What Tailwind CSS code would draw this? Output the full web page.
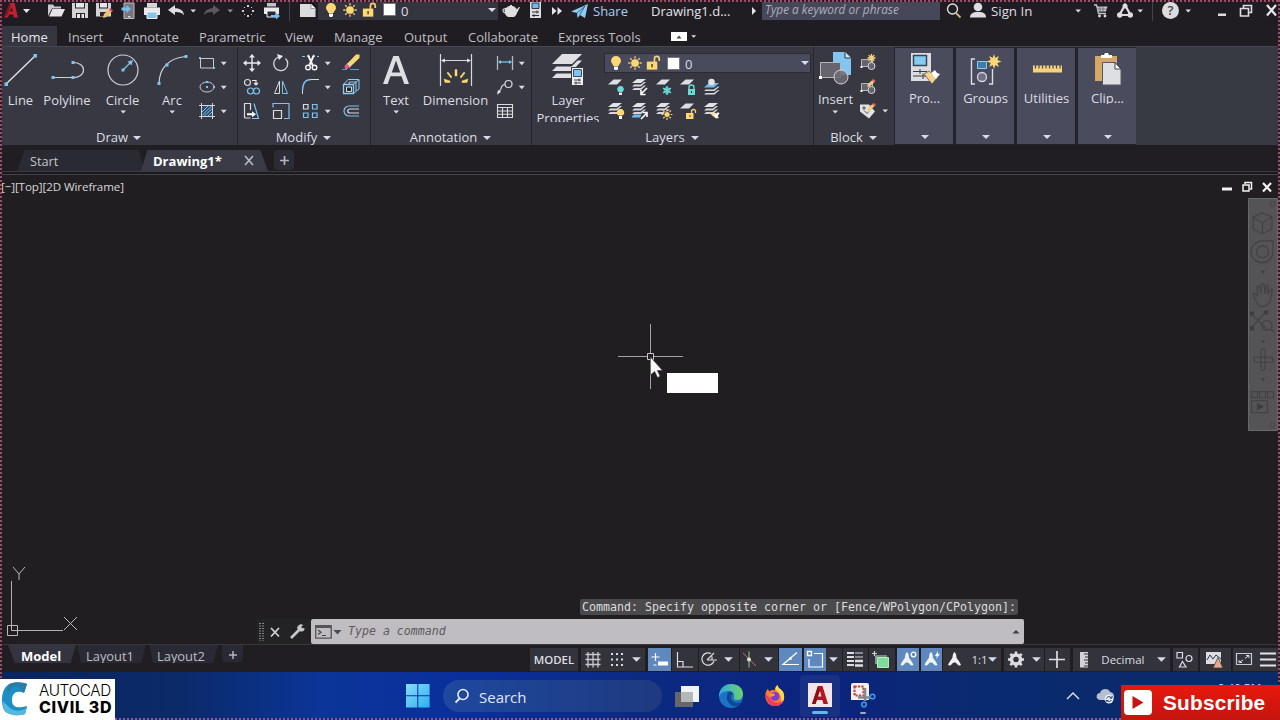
<!DOCTYPE html>
<html lang="en">
<head>
<meta charset="utf-8">
<title>Drawing1 - CAD</title>
<script src="https://cdn.jsdelivr.net/npm/@tailwindcss/browser@4"></script>
</head>
<body class="bg-[#201e22]">
<svg width="0" height="0" class="absolute">
  <defs>
    <symbol id="caret" viewBox="0 0 10 10"><path d="M2.500 3.500h5.500L5.200 6.500z" fill="#dcdde4"/></symbol>
    <symbol id="bigcaret" viewBox="0 0 10 10"><path d="M1 3h8L5 7z" fill="#d6dbea"/></symbol>
    <symbol id="bulb" viewBox="0 0 20 20"><path d="M10 3a5 5 0 0 0-5 5c0 2 2 3 2.500 5h5c.5-2 2.500-3 2.500-5a5 5 0 0 0-5-5z" fill="#ffd873"/><path d="M8 13.500h4V16l-1 1H9l-1-1z" fill="#fff"/></symbol>
    <symbol id="sun" viewBox="0 0 20 20"><circle cx="10" cy="10" r="4.300" fill="#ffd873"/><path d="M10 2.500v2.500M10 15v2.500M2.500 10H5M15 10h2.500M4.700 4.700l1.700 1.700M13.600 13.600l1.700 1.700M4.700 15.300l1.700-1.700M13.600 6.400l1.700-1.700" stroke="#f3cd77" stroke-width="1.500"/></symbol>
    <symbol id="lock" viewBox="0 0 20 20"><path d="M11 9V5.500a2.500 2.500 0 0 1 5 0V8" fill="none" stroke="#f3cd77" stroke-width="1.800"/><path d="M3 8.500h11V17H3z" fill="#ffd873"/><path d="M8.500 11v3.500" stroke="#43412f" stroke-width="1.500"/></symbol>
    <symbol id="stack" viewBox="0 0 24 24"><path d="M9 4h9l-5 4H4z" fill="#e2e3e6"/><path d="M16 7h2l-5 4.500H4l2.200-2h6.600zM16 10.500h2L13 15H4l2.200-2h6.600z" fill="#d4d6db"/></symbol>
    <symbol id="sheet" viewBox="0 0 24 24"><path d="M9.500 4.500H18l-5 5H4z" fill="#dcdee3"/></symbol>
    <symbol id="blockbase" viewBox="0 0 24 24"><path d="M5.500 8.500h11v7h-11z" fill="#66646c" stroke="#b5b6bc"/><circle cx="15.500" cy="15" r="3.500" fill="#66646c" stroke="#d5d6da"/><path d="M4.500 15h2v2h-2z" fill="#fff"/></symbol>
    <symbol id="person" viewBox="0 0 22 22"><path d="M11 3c1.400 1.200 2 3.500 2 5.700 1.400 2.400 3.800 4.800 4.500 7.300-1 1-3 .3-3.700-.8-.8-1-1.700-1.700-2.800-1.700s-2 .7-2.800 1.700c-.7 1.100-2.700 1.800-3.700.8.700-2.500 3.100-4.900 4.500-7.300C9 6.500 9.600 4.200 11 3z" fill="#f1f1f3"/></symbol>
  </defs>
</svg>

<div class="relative flex h-[720px] w-[1280px] flex-col overflow-hidden bg-[#201e22] font-['Open_Sans','Noto_Sans',sans-serif] text-[13px] text-[#dddde2]">

  <!-- title bar -->
  <header class="flex h-[26px] shrink-0 bg-[#201d22]">
    <div class="flex h-[21px] w-full items-center">
      <svg class="w-[20px] h-[20px]" viewBox="0 0 20 20"><path d="M4 16.500 10 2h4.500l3.500 14.500h-4.200l-.6-3H9l-1.200 3zM10 10.500h2.700L12 6z" fill="#c32032"/><path d="M4 16.500 10 2l1 3-3.500 9z" fill="#8c1423"/></svg>
      <svg class="w-[12px] h-[12px]" viewBox="0 0 12 12"><path d="M3 4h7L6.500 8z" fill="#e4e4ea"/></svg>
      <svg class="ml-[12px] h-[20px] w-[24px]" viewBox="0 0 24 20"><path d="M4 15V3.500h5l1.500 2H17V7.500H8z" fill="#c9c9cd"/><path d="M8.500 8H21l-3.500 7.500H5z" fill="#e5e4e6"/></svg>
      <svg class="h-[20px] w-[24px]" viewBox="0 0 24 20"><path d="M4 2h16v15H4z" fill="#d4d2d5"/><path d="M7 2h10v5.500H7zM8 12h9v5H8z" fill="#29272b"/><path d="M8 2h8v4.500H8zM9 13h3v4H9zM13.500 13h2.500v4h-2.500z" fill="#e7e7ea"/></svg>
      <svg class="h-[20px] w-[24px]" viewBox="0 0 24 20"><path d="M4 2h15v13.500H4z" fill="#d4d2d5"/><path d="M7 2h9v5.500H7zM8 11h8v4H8z" fill="#29272b"/><path d="M8 2h7v4.500H8z" fill="#e7e7ea"/><path d="m11 17 1-4 6-5.500 2.500 2.500-6 6z" fill="#f3c25c"/><path d="m17 8.500 1.500-1.500 2.500 2.500-1.500 1.500z" fill="#d4466a"/></svg>
      <svg class="h-[20px] w-[24px]" viewBox="0 0 24 20"><path d="M8 2h10v15.500H8z" fill="#77777d" stroke="#bdbdc1"/><path d="M12 15.800h2.500" stroke="#fff"/><path d="M5.500 6.500h5V4l4.500 4-4.500 4V9.500h-5z" fill="#74c0f2"/></svg>
      <svg class="h-[20px] w-[24px]" viewBox="0 0 24 20"><path d="M7 2h10v4.500H7z" fill="#d5d6d8"/><path d="M4 6.500h16V14H4z" fill="#e9e9eb"/><path d="M7 11h10v6.500H7z" fill="#8bc2ec" stroke="#f3f3f3"/></svg>
      <svg class="h-[20px] w-[24px]" viewBox="0 0 24 20"><path d="m4 9 7-5v3.300c5 0 8.500 2 9 7-2-2.800-5-3.500-9-3.300v3z" fill="#dedee2"/></svg>
      <svg class="h-[10px] w-[10px]"><use href="#caret"/></svg>
      <svg class="ml-[3px] h-[20px] w-[24px]" viewBox="0 0 24 20"><path d="m19 9-7-5v3.300c-5 0-8.500 2-9 7 2-2.800 5-3.500 9-3.300v3z" fill="#59595e"/></svg>
      <svg class="h-[10px] w-[10px] opacity-60"><use href="#caret"/></svg>
      <svg class="ml-[1px] h-[20px] w-[24px]" viewBox="0 0 24 20"><path d="M11 4h2v2h-2zM11 14h2v2h-2zM6 9h2v2H6zM16 9h2v2h-2zM8 6h1v1H8zM15 6h1v1h-1zM8 13h1v1H8zM15 13h1v1h-1z" fill="#cfd0d4"/></svg>
      <svg class="h-[20px] w-[24px]" viewBox="0 0 24 20"><path d="M7 2h9v3.500H7z" fill="#bfc0c4"/><path d="M4 6.500h15V13H4z" fill="#e9e9eb"/><path d="M7 10h9v6H7z" fill="#29272b" stroke="#f3f3f3"/><path d="M11 14h5v-2.500l4 3.500-4 3.500V16h-5z" fill="#74c0f2"/></svg>
      <div class="ml-[5px] h-[20px] w-px bg-[#45434a]"></div>
      <svg class="ml-[7px] h-[20px] w-[21px]" viewBox="0 0 21 20"><path d="M3 3h11l4.500 4.500V16H3z" fill="#dcdbdd"/><path d="M14 3v4.500h4.500" fill="#fff" stroke="#77777b" stroke-width=".7"/></svg>
      <div class="flex h-[20px] w-[180px] -translate-y-px items-center bg-[#35353f] pl-[3px]">
        <svg class="h-[20px] w-[20px]"><use href="#bulb"/></svg>
        <svg class="h-[20px] w-[18px]"><use href="#sun"/></svg>
        <svg class="ml-px h-[20px] w-[19px]"><use href="#lock"/></svg>
        <div class="ml-[4px] h-[13px] w-[13px] border border-[#777] bg-white"></div>
        <span class="ml-[5px] translate-y-px leading-5">0</span>
        <svg class="ml-auto h-[12px] w-[12px]"><use href="#bigcaret" x="1" y="1" width="10" height="10"/></svg>
      </div>
      <svg class="ml-[2px] h-[20px] w-[22px]" viewBox="0 0 22 20"><path d="M7 6.500c0-1 2-1.500 3-1.500V4h2v1c1 0 3 .5 3 1.500 1 .4 1.500 1 1.700 2L19 6h1l-3 6c-.6 1.700-1.500 3-3 4H8c-1.500-1-2.500-2-3-3.500C3 12 2 10 2.500 8.500S5.500 7 7 6.500z" fill="#dedde0"/><path d="M5 11C3.500 10.500 3.500 8.700 5 8.500" fill="none" stroke="#201d22" stroke-width=".9"/></svg>
      <svg class="ml-[3px] h-[20px] w-[20px]" viewBox="0 0 20 20"><path d="M5 1h11v16H5z" fill="#dfdfe2"/><path d="M7 2h7v5.500H7z" fill="#6fb9e6" stroke="#2d3d4b"/><path d="M7 11h7M7 14.500h7M12 9.500v3M9 13v3" stroke="#303036"/></svg>
      <svg class="ml-[4px] h-[20px] w-[16px]" viewBox="0 0 16 20"><path d="m3 6 4.500 4L3 14zM8.500 6l4.500 4-4.500 4z" fill="#e6e6ea"/></svg>
      <svg class="ml-[5px] h-[20px] w-[20px]" viewBox="0 0 20 20"><path d="M1 10.500 18 3l-3 14-5-3-2.500 3-.5-5z" fill="#8bcdf5"/><path d="m7 12 8-7-5.500 9" fill="none" stroke="#29506c" stroke-width=".8"/></svg>
      <span class="ml-[3px] w-[58px] translate-y-px text-[13px] text-[#a5d4f3]">Share</span>
      <span class="w-[98px] translate-y-px text-[#e2e2e6]">Drawing1.d...</span>
      <svg class="h-[10px] w-[10px]" viewBox="0 0 10 10"><path d="M3 1l4 4-4 4z" fill="#e6e6ea"/></svg>
      <div class="ml-[3px] flex h-[20px] w-[178px] -translate-y-px items-center bg-[#46485a] pl-[3px] text-[11.800px] italic text-[#acaebb]">Type a keyword or phrase</div>
      <svg class="ml-[5px] h-[20px] w-[18px]" viewBox="0 0 18 20"><circle cx="7.500" cy="8" r="5" fill="none" stroke="#dedee2" stroke-width="1.400"/><path d="m11 12 4.500 4.500" stroke="#d2b27e" stroke-width="1.800"/></svg>
      <svg class="ml-[6px] h-[20px] w-[18px]" viewBox="0 0 18 20"><circle cx="9" cy="6" r="4.300" fill="#dddce0"/><path d="M1 16.500c0-4 3-5 5.500-5.500h5c3 .5 5.500 1.500 5.500 5.500z" fill="#dddce0"/></svg>
      <span class="ml-[4px] w-[82px] translate-y-px text-[13.300px]">Sign In</span>
      <svg class="h-[10px] w-[10px]"><use href="#caret"/></svg>
      <svg class="ml-[9px] h-[20px] w-[18px]" viewBox="0 0 18 20"><path d="M2 4h2.500l2 8.500H14" fill="none" stroke="#c5c5c9" stroke-width="1.300"/><path d="M5 5.500h10.500l-1.500 5H6.500z" fill="#c5c5c9"/><path d="M5 8h10M8 5v6M11 5v6" stroke="#504f54" stroke-width=".6"/><circle cx="7.500" cy="15" r="1.400" fill="#ddd"/><circle cx="13" cy="15" r="1.400" fill="#ddd"/></svg>
      <svg class="ml-[6px] h-[20px] w-[18px]" viewBox="0 0 18 20"><path d="M9 4 3.500 14h11z" fill="none" stroke="#dddce0" stroke-width="2.200"/><circle cx="9" cy="5" r="2.500" fill="#dddce0"/><circle cx="3.700" cy="14" r="2.700" fill="#dddce0"/><circle cx="14.300" cy="14" r="2.700" fill="#dddce0"/></svg>
      <svg class="ml-[1px] h-[10px] w-[10px]"><use href="#caret"/></svg>
      <div class="ml-[7px] h-[20px] w-px bg-[#45434a]"></div>
      <div class="ml-[9px] flex h-[17px] w-[17px] items-center justify-center rounded-full bg-[#dcdbde] text-[13px] font-semibold text-[#444349]">?</div>
      <svg class="ml-[4px] h-[10px] w-[10px]"><use href="#caret"/></svg>
      <svg class="ml-[23px] h-[20px] w-[12px] shrink-0" viewBox="0 0 12 20"><path d="M2 12.500h8V15H2z" fill="#dddce0"/></svg>
      <svg class="ml-[10px] h-[20px] w-[16px] shrink-0" viewBox="0 0 16 20"><path d="M5.500 7V4.500h8v7H11M2.500 7.500h8V15h-8z" fill="none" stroke="#dddce0" stroke-width="1.600"/></svg>
      <svg class="ml-[9px] h-[20px] w-[16px] shrink-0" viewBox="0 0 16 20"><path d="m4 4 9 10.500M13 4 4 14.500" stroke="#e8e7eb" stroke-width="2.200"/></svg>
    </div>
  </header>

  <!-- ribbon tabs -->
  <nav class="flex h-[20px] shrink-0 bg-[#201d22] pl-[2px] leading-[23px] text-[#bfbfc5]">
    <span class="w-[55px] bg-[#35363f] pl-[9px] text-[#e6e6ea]">Home</span>
    <span class="w-[55px] pl-[11px]">Insert</span>
    <span class="w-[76px] pl-[11px]">Annotate</span>
    <span class="w-[86px] pl-[11px]">Parametric</span>
    <span class="w-[49px] pl-[11px]">View</span>
    <span class="w-[70px] pl-[11px]">Manage</span>
    <span class="w-[64px] pl-[11px]">Output</span>
    <span class="w-[90px] pl-[11px]">Collaborate</span>
    <span class="w-[124px] pl-[11px]">Express Tools</span>
    <span class="mt-[6px] flex h-[9px] w-[16px] items-center justify-center bg-white"><svg class="h-[8px] w-[8px]" viewBox="0 0 8 8"><path d="M1.500 5.500h5L4 2.500z" fill="#444"/></svg></span>
    <svg class="ml-[2px] mt-[6px] h-[9px] w-[9px]"><use href="#caret"/></svg>
  </nav>

  <!-- ribbon -->
  <section class="flex h-[99px] shrink-0 border-t border-[#45464f] bg-[#373a42] pl-px text-[#dcdde3]">
    <div class="flex w-[237px] flex-col border-r border-[#26262d] bg-[#373841] pt-[4px]">
      <div class="flex h-[72px]">
        <div class="flex w-[39px] flex-col items-center">
          <svg class="h-[38px] w-[39px]" viewBox="0 0 39 38"><path d="M5 33 34 5" stroke="#e6e6ea" stroke-width="1.300"/><path d="M3.500 31.500h3.500V35H3.500zM32.500 3H36v3.500h-3.500z" fill="#7cc4f2"/></svg>
          <span class="leading-[22px]">Line</span>
        </div>
        <div class="flex w-[54px] flex-col items-center">
          <svg class="h-[38px] w-[40px]" viewBox="0 0 40 38"><path d="M6 26.500h20M26 11.500c6 0 10.500 3 10.500 7.500S32 26.500 26 26.500" fill="none" stroke="#d0d1d7" stroke-width="1.200"/><path d="M4.500 25h3v3h-3zM24.500 25h3v3h-3zM24.500 10h3v3h-3z" fill="#7cc4f2"/></svg>
          <span class="leading-[22px]">Polyline</span>
        </div>
        <div class="flex w-[57px] flex-col items-center">
          <svg class="h-[38px] w-[40px]" viewBox="0 0 40 38"><circle cx="20" cy="19" r="15" fill="none" stroke="#d0d1d7" stroke-width="1.200"/><path d="m20 19 7-7" stroke="#7cc4f2" stroke-width="1.300"/><path d="M24.500 10.500 30 9l-1.500 5.500zM18.500 17.500h3v3h-3z" fill="#7cc4f2"/></svg>
          <span class="leading-[22px]">Circle</span>
          <svg class="-mt-[4px] h-[10px] w-[10px]"><use href="#caret"/></svg>
        </div>
        <div class="flex w-[42px] flex-col items-center">
          <svg class="h-[38px] w-[40px]" viewBox="0 0 40 38"><path d="M7 33C7 17 17 7 33.500 5.500" fill="none" stroke="#d0d1d7" stroke-width="1.200"/><path d="M5.500 31h3v3h-3zM13.500 12.500h3v3h-3zM32.500 4h3v3h-3z" fill="#7cc4f2"/></svg>
          <span class="leading-[22px]">Arc</span>
          <svg class="-mt-[4px] h-[10px] w-[10px]"><use href="#caret"/></svg>
        </div>
        <div class="ml-[2px] flex flex-col">
          <div class="flex h-[24px] items-center"><svg class="h-[24px] w-[24px]" viewBox="0 0 24 24"><path d="M5.500 7.500h13v9.500h-13z" fill="none" stroke="#c9cad0"/><path d="M4 6h2v2H4zM18 16h2v2h-2z" fill="#7cc4f2"/></svg><svg class="-ml-px h-[11px] w-[11px]"><use href="#caret"/></svg></div>
          <div class="flex h-[24px] items-center"><svg class="h-[24px] w-[24px]" viewBox="0 0 24 24"><ellipse cx="12" cy="12" rx="7" ry="5" fill="none" stroke="#c9cad0"/><path d="M11 11h2v2h-2zM18 11h2v2h-2zM11 6h2v2h-2z" fill="#7cc4f2"/></svg><svg class="-ml-px h-[11px] w-[11px]"><use href="#caret"/></svg></div>
          <div class="flex h-[24px] items-center"><svg class="h-[24px] w-[24px]" viewBox="0 0 24 24"><path d="M7 7h10v10H7z" fill="#2e4c66"/><path d="M7 13l6-6M7 16.500 16.500 7M9.500 17l7.500-7.500M13 17l4-4" stroke="#7cc4f2"/><path d="M4 6.500h16M4 17.500h16M6.500 4v16M17.500 4v16" stroke="#d3d4d9"/></svg><svg class="-ml-px h-[11px] w-[11px]"><use href="#caret"/></svg></div>
        </div>
      </div>
      <div class="flex h-[22px] items-center justify-center gap-[4px] pt-[7px]">Draw<svg class="h-[10px] w-[10px]"><use href="#bigcaret"/></svg></div>
    </div>

    <div class="flex w-[133px] flex-col border-r border-[#26262d] bg-[#373841] pt-[4px]">
      <div class="grid h-[72px] grid-cols-[29px_29px_26px_11px_32px] grid-rows-3">
        <svg class="h-[24px] w-[28px]" viewBox="0 0 28 24"><path d="M14 5v14M7 12h14" stroke="#e9e9ed" stroke-width="1.400"/><path d="m14 3 3 3.500h-6zM14 21l3-3.500h-6zM5 12l3.500-3v6zM23 12l-3.500-3v6z" fill="#e9e9ed"/></svg>
        <svg class="h-[24px] w-[28px]" viewBox="0 0 28 24"><path d="M18.500 7.500A7 7 0 1 1 11.500 6" fill="none" stroke="#d9dae0" stroke-width="1.300"/><path d="M10 3l6 2-4 4z" fill="#e9e9ed"/></svg>
        <svg class="h-[24px] w-[28px]" viewBox="0 0 28 24"><path d="M6 5.500h17" stroke="#7cc4f2" stroke-dasharray="3 2"/><path d="m12 4 5 11M18 4l-5 11" stroke="#f3f3f3" stroke-width="1.900"/><circle cx="12" cy="16.500" r="2.300" fill="none" stroke="#f3f3f3" stroke-width="1.400"/><circle cx="18.500" cy="16.500" r="2.300" fill="none" stroke="#f3f3f3" stroke-width="1.400"/></svg>
        <svg class="h-[11px] w-[11px] place-self-center"><use href="#caret"/></svg>
        <svg class="ml-[4px] h-[24px] w-[28px]" viewBox="0 0 28 24"><path d="m10 13 9-9.500h3.500V7L13 16z" fill="#f9d873"/><path d="m10 13 3 3" stroke="#fff" stroke-width="2"/><path d="m7.500 15 2.500-2.500 3 3-2.500 2.500H8z" fill="#e0617b"/><path d="M5 18.500h5M13 18.500h9" stroke="#4a9fdb" stroke-width="1.200"/></svg>

        <svg class="h-[24px] w-[28px]" viewBox="0 0 28 24"><circle cx="9.500" cy="7.500" r="3" fill="none" stroke="#d9dae0" stroke-width="1.200"/><path d="M14 5.500h4V9M16 8l2 2 2-2" fill="none" stroke="#e9e9ed" stroke-width="1.200"/><circle cx="12.500" cy="16" r="3" fill="none" stroke="#7cc4f2" stroke-width="1.200"/><circle cx="18.500" cy="16" r="3" fill="none" stroke="#7cc4f2" stroke-width="1.200"/></svg>
        <svg class="h-[24px] w-[28px]" viewBox="0 0 28 24"><path d="M12.500 6v12.500h-5z" fill="none" stroke="#d9dae0"/><path d="M15.500 6v12.500h5z" fill="none" stroke="#7cc4f2"/></svg>
        <svg class="h-[24px] w-[28px]" viewBox="0 0 28 24"><path d="M6.500 19v-3M15 4.500h8" stroke="#d9dae0"/><path d="M6.500 16C6.500 9 9 4.500 15 4.500" fill="none" stroke="#7cc4f2" stroke-width="1.300"/></svg>
        <svg class="h-[11px] w-[11px] place-self-center"><use href="#caret"/></svg>
        <svg class="ml-[4px] h-[24px] w-[28px]" viewBox="0 0 28 24"><path d="M6.500 9.500h10v9h-10z" fill="none" stroke="#8ccdf5" stroke-width="1.300"/><path d="M9.500 12h5v4.500h-5z" fill="#1e2830" stroke="#d9dae0"/><path d="M6.500 9.500l4.500-5H22l-5.500 5M22 4.500v9.500l-5.500 4.500M12 9V7h7v9" fill="none" stroke="#8ccdf5"/></svg>

        <svg class="h-[24px] w-[28px]" viewBox="0 0 28 24"><path d="M6.500 19V4.500h6V11M6.500 19h6" fill="none" stroke="#d9dae0" stroke-width="1.200"/><path d="M16 4.500l4.500 15H14" fill="none" stroke="#7cc4f2" stroke-width="1.200"/><path d="M9 14.300h5v-2l4 3-4 3v-2H9z" fill="#fff"/></svg>
        <svg class="h-[24px] w-[28px]" viewBox="0 0 28 24"><path d="M6 8.500V4.500h16V19.500h-5" fill="none" stroke="#7cc4f2" stroke-width="1.200"/><path d="M6.500 11.500h8v8h-8z" fill="none" stroke="#d9dae0" stroke-width="1.200"/></svg>
        <svg class="h-[24px] w-[28px]" viewBox="0 0 28 24"><path d="M7.500 5.500H12V10H7.500z" fill="none" stroke="#d9dae0" stroke-width="1.200"/><path d="M16.500 5.500H21V10h-4.500zM7.500 14H12v4.500H7.500zM16.500 14H21v4.500h-4.500z" fill="none" stroke="#7cc4f2" stroke-width="1.200"/></svg>
        <svg class="h-[11px] w-[11px] place-self-center"><use href="#caret"/></svg>
        <svg class="ml-[4px] h-[24px] w-[28px]" viewBox="0 0 28 24"><path d="M22 7H12a5 5 0 0 0 0 10h10" fill="none" stroke="#7cc4f2" stroke-width="1.200"/><path d="M22 10h-9c-3 0-3 4 0 4h9" fill="none" stroke="#d9dae0" stroke-width="1.200"/></svg>
      </div>
      <div class="flex h-[22px] items-center justify-center gap-[5px] pt-[7px]">Modify<svg class="h-[10px] w-[10px]"><use href="#bigcaret"/></svg></div>
    </div>

    <div class="flex w-[161px] flex-col border-r border-[#26262d] bg-[#373841] pt-[4px]">
      <div class="flex h-[72px]">
        <div class="flex w-[50px] flex-col items-center">
          <svg class="h-[38px] w-[40px]" viewBox="0 0 40 38"><path d="M7 33 17.300 5h5.400L33 33h-4.700l-2.800-7.800h-11L11.700 33zm8.800-11.600h8.400L20 9.500z" fill="#dedfe3"/></svg>
          <span class="leading-[22px]">Text</span>
          <svg class="-mt-[4px] h-[10px] w-[10px]"><use href="#caret"/></svg>
        </div>
        <div class="flex w-[69px] flex-col items-center">
          <svg class="h-[38px] w-[40px]" viewBox="0 0 40 38"><path d="M4.500 3v32M35.500 3v32M6 9.500h28" stroke="#d9dae0" stroke-width="1.200"/><path d="m5 9.500 4-2v4zM35 9.500l-4-2v4z" fill="#e9e9ed"/><path d="m19 19 1-1 1 1v6h-2zM12 21l4 5-1 1-4-5zM28 21l-4 5 1 1 4-5zM8 28l6 2v1.500H9zM32 28l-6 2v1.500h5z" fill="#ffd873" stroke="#ffd873" stroke-width=".5"/></svg>
          <span class="leading-[22px]">Dimension</span>
        </div>
        <div class="ml-[3px] flex flex-col">
          <div class="flex h-[24px] items-center"><svg class="h-[24px] w-[24px]" viewBox="0 0 24 24"><path d="M4.500 5v14M19.500 5v14" stroke="#b9bac0" stroke-width="1.300"/><path d="M6 11h12" stroke="#7cc4f2" stroke-width="1.300"/><path d="m5 11 3-2v4zM19 11l-3-2v4z" fill="#7cc4f2"/></svg><svg class="-ml-px h-[11px] w-[11px]"><use href="#caret"/></svg></div>
          <div class="flex h-[24px] items-center"><svg class="h-[24px] w-[24px]" viewBox="0 0 24 24"><circle cx="15.500" cy="9" r="3.500" fill="none" stroke="#d9dae0" stroke-width="1.200"/><path d="M12 9.500c-3 0-3.500 2-4 4L6 17" fill="none" stroke="#d9dae0" stroke-width="1.200"/><path d="m4 19.500 1-4.500 3 2z" fill="#e9e9ed"/></svg><svg class="-ml-px h-[11px] w-[11px]"><use href="#caret"/></svg></div>
          <div class="flex h-[24px] items-center"><svg class="h-[24px] w-[24px]" viewBox="0 0 24 24"><path d="M4.500 5.500h15v13h-15zM4.500 8.500h15M4.500 12h15M4.500 15.200h15M9.500 8.500v10M14.500 8.500v10" fill="none" stroke="#d9dae0" stroke-width="1.100"/></svg></div>
        </div>
      </div>
      <div class="flex h-[22px] items-center justify-center gap-[5px] pt-[7px]">Annotation<svg class="h-[10px] w-[10px]"><use href="#bigcaret"/></svg></div>
    </div>

    <div class="flex w-[282px] flex-col border-r border-[#26262d] bg-[#373841] pt-[4px]">
      <div class="flex h-[72px]">
        <div class="flex w-[72px] flex-col items-center overflow-hidden">
          <svg class="h-[38px] w-[40px] shrink-0" viewBox="0 0 40 38"><path d="M14 3h20L24 13H4zM32 9.500h2L24 20H4l4.500-4.500H23.500l6-6zM32 16.500h2L24 27H4l4.500-4.500H23.500l6-6z" fill="#e0e0e4"/><path d="M23.500 16.500h12v18h-12z" fill="#f0f0f2" stroke="#383941"/><path d="M25.500 18.500h8v7h-8z" fill="#7cc4f2" stroke="#3c4b58"/><path d="M26 29h7M26 32h7M31 27.500v3M28 30.500v3" stroke="#404047"/></svg>
          <span class="leading-[22px]">Layer</span>
          <span class="-mt-[2px] h-[13px] overflow-hidden leading-[18px]">Properties</span>
        </div>
        <div class="flex flex-col">
          <div class="mt-[2px] flex h-[20px] w-[207px] items-center border border-[#2b2b33] bg-[#494b5d] pl-px">
            <svg class="h-[20px] w-[20px]"><use href="#bulb"/></svg>
            <svg class="h-[20px] w-[18px]"><use href="#sun"/></svg>
            <svg class="h-[20px] w-[19px]"><use href="#lock"/></svg>
            <div class="ml-[4px] h-[13px] w-[13px] border border-[#777] bg-white"></div>
            <span class="ml-[5px] translate-y-px leading-5">0</span>
            <svg class="ml-auto h-[10px] w-[10px]"><use href="#bigcaret"/></svg>
          </div>
          <div class="mt-[2px] flex h-[24px]">
            <svg class="h-[24px] w-[24px]" viewBox="0 0 24 24"><use href="#sheet"/><path d="M16.500 11a3.300 3.300 0 0 0-2 6h4a3.300 3.300 0 0 0-2-6z" fill="#67dcd6"/><path d="M15 17.500h3V20h-3z" fill="#e9e9ed"/></svg>
            <svg class="h-[24px] w-[24px]" viewBox="0 0 24 24"><use href="#stack"/><path d="m19 13-6 6M13 15v4.500h4.500" fill="none" stroke="#fff" stroke-width="1.600"/></svg>
            <svg class="h-[24px] w-[24px]" viewBox="0 0 24 24"><use href="#sheet"/><path d="M15 11v9M11 13.200l8 4.600M19 13.200l-8 4.600" stroke="#67dcd6" stroke-width="1.500"/><circle cx="15" cy="15.500" r="2.800" fill="none" stroke="#67dcd6"/></svg>
            <svg class="h-[24px] w-[24px]" viewBox="0 0 24 24"><use href="#sheet"/><path d="M13 14v-1.500a2.500 2.500 0 0 1 5 0V14" fill="none" stroke="#67dcd6" stroke-width="1.400"/><path d="M12 14h7v6h-7z" fill="#67dcd6"/><path d="M15.500 16v2" stroke="#234"/></svg>
            <svg class="h-[24px] w-[24px]" viewBox="0 0 24 24"><path d="M9 8h10l-5 4.500H4z" fill="#75bce9"/><path d="M18 11.500h1.500l-5 4.500H4l1.800-1.600h8zM18 15h1.500l-5 4.500H4L5.800 18h8z" fill="#dcdde2"/><circle cx="11.500" cy="7" r="3.300" fill="#e3e3e8"/></svg>
          </div>
          <div class="flex h-[24px]">
            <svg class="h-[24px] w-[24px]" viewBox="0 0 24 24"><use href="#stack"/><path d="M16.500 10a3.500 3.500 0 0 0-2 6.500h4a3.500 3.500 0 0 0-2-6.500z" fill="#ffd873"/><path d="M15 17h3v3h-3z" fill="#fff"/></svg>
            <svg class="h-[24px] w-[24px]" viewBox="0 0 24 24"><use href="#stack"/><path d="M4 17.500 6 15.500h7.500L12 18.500H4z" fill="#75bce9"/><path d="m13 20 6-6M14.500 13.500H19V18" fill="none" stroke="#fff" stroke-width="1.600"/></svg>
            <svg class="h-[24px] w-[24px]" viewBox="0 0 24 24"><use href="#stack"/><circle cx="15" cy="15.500" r="3" fill="#ffd873" stroke="#373841" stroke-width=".8"/><path d="M15 10v11M9.500 15.500h11M11 11.500l8 8M19 11.500l-8 8" stroke="#f3cd77" stroke-width="1.200" stroke-dasharray="2 7"/></svg>
            <svg class="h-[24px] w-[24px]" viewBox="0 0 24 24"><use href="#sheet"/><path d="M15.500 14v-1.500a2 2 0 0 1 4 0V14" fill="none" stroke="#f3cd77" stroke-width="1.400"/><path d="M10 14h7.500v6H10z" fill="#ffd873"/><path d="M14 16v2" stroke="#443"/></svg>
            <svg class="h-[24px] w-[24px]" viewBox="0 0 24 24"><use href="#stack"/><path d="m12 13 4 1 3 5-3 .5-5-4z" fill="#f6e3b0"/><path d="m14 17 4-4 1.500 1.500-3.500 4.500z" fill="#fff"/></svg>
          </div>
        </div>
      </div>
      <div class="flex h-[22px] items-center justify-center gap-[5px] pt-[7px]">Layers<svg class="h-[10px] w-[10px]"><use href="#bigcaret"/></svg></div>
    </div>

    <div class="flex w-[80px] flex-col bg-[#373841] pt-[4px]">
      <div class="flex h-[72px]">
        <div class="flex w-[42px] flex-col items-center">
          <svg class="h-[38px] w-[40px] shrink-0" viewBox="0 0 40 38"><path d="M18 1h12l6 6v17H18z" fill="#82c6ef"/><path d="M30 1v6h6" fill="#c9e6f8" stroke="#2f3b47"/><path d="M5.500 11.500h20v15h-20z" fill="#66646c" stroke="#b5b6bc"/><circle cx="26" cy="26" r="7" fill="#6d6b73" fill-opacity=".85" stroke="#d5d6da"/><path d="M4 25h3v3H4z" fill="#fff"/></svg>
          <span class="ml-px leading-[20px]">Insert</span>
          <svg class="-mt-[2px] h-[10px] w-[10px]"><use href="#caret"/></svg>
        </div>
        <div class="flex flex-col">
          <svg class="h-[24px] w-[24px]" viewBox="0 0 24 24"><use href="#blockbase"/><path d="M15.500 3v8M11.500 7h8M12.700 4.200l5.600 5.600M18.300 4.200l-5.600 5.600" stroke="#f9d081" stroke-width="1.400"/></svg>
          <svg class="h-[24px] w-[24px]" viewBox="0 0 24 24"><use href="#blockbase"/><path d="m11 12 1-3 5-4.500 2 2-5 4.800z" fill="#f3cd77"/><path d="m16 5.500 1.500-1.500 2 2L18 7.500z" fill="#e0617b"/></svg>
          <div class="flex items-center"><svg class="h-[24px] w-[24px]" viewBox="0 0 24 24"><path d="M4 5.500h9l6 7-6 7-9-7z" fill="#e3e3e6"/><path d="M7 8h2v2H7zM8 11.500l3 3 2-2" fill="none" stroke="#55565e"/><path d="m11 13 1-4 5-4.500 2 2-5 5z" fill="#f3cd77"/><path d="m16 5.500 2-1.500 2 2-1.500 1.500z" fill="#e0617b"/></svg><svg class="h-[10px] w-[10px]"><use href="#caret"/></svg></div>
        </div>
      </div>
      <div class="flex h-[22px] items-center justify-center gap-[5px] pt-[7px]">Block<svg class="h-[10px] w-[10px]"><use href="#bigcaret"/></svg></div>
    </div>

    <div class="flex gap-[3px] bg-[#23232b] pl-px text-center">
      <div class="mt-px flex h-[96px] w-[58px] flex-col items-center bg-[#4a4c5d] pl-px pt-[3px]">
        <svg class="h-[36px] w-[36px]" viewBox="0 0 36 36"><path d="M4 2h20v28H4z" fill="#dcdde1"/><path d="M6.500 4.500h13v10h-13z" fill="#85cbf4" stroke="#3a4550" stroke-width="1.500"/><path d="M6 20.500h14M6 25h14M13 18v5M16 22.500V28" stroke="#3b3c44"/><path d="m17 23 5-3 8 7-5 6z" fill="#f6d387" stroke="#4b4c55" stroke-width=".7"/><path d="m24 22 4-3 2 3 3 1-4 5z" fill="#fff"/></svg>
        <span class="h-[17px] overflow-hidden leading-[22px]">Pro...</span>
        <svg class="mt-[28px] h-[10px] w-[10px]"><use href="#bigcaret"/></svg>
      </div>
      <div class="mt-px flex h-[96px] w-[58px] flex-col items-center bg-[#4a4c5d] pl-px pt-[3px]">
        <svg class="h-[36px] w-[36px]" viewBox="0 0 36 36"><path d="M7 8H3.500v25H7M21 33h3.500V18" fill="none" stroke="#dcdde2" stroke-width="1.400"/><path d="M9.500 10.500h9v7h-9z" fill="#3f7eab" stroke="#8fcaf0"/><circle cx="14" cy="26" r="4.500" fill="#6f7080" stroke="#d6d7de" stroke-width="1.300"/><path d="m26 3 1.300 4 3.500-2-1.500 4 4.200 1.500-4.200 1.500 1.500 4-3.500-2-1.300 4-1.300-4-3.500 2 1.500-4-4.200-1.500 4.200-1.500-1.500-4 3.500 2z" fill="#ffd873"/></svg>
        <span class="h-[17px] overflow-hidden leading-[22px]">Groups</span>
        <svg class="mt-[28px] h-[10px] w-[10px]"><use href="#bigcaret"/></svg>
      </div>
      <div class="mt-px flex h-[96px] w-[58px] flex-col items-center bg-[#4a4c5d] pl-px pt-[3px]">
        <svg class="h-[36px] w-[36px]" viewBox="0 0 36 36"><path d="M4 14.500h29v7H4z" fill="#f6d37b"/><path d="M6.500 14V17.500M10 14V17.500M13.500 14V17.500M17 14V17.500M20.500 14V17.500M24 14V17.500M27.500 14V17.500M31 14v3.500" stroke="#4a4c5d" stroke-width="1.200"/></svg>
        <span class="h-[17px] overflow-hidden leading-[22px]">Utilities</span>
        <svg class="mt-[28px] h-[10px] w-[10px]"><use href="#bigcaret"/></svg>
      </div>
      <div class="mt-px flex h-[96px] w-[58px] flex-col items-center bg-[#4a4c5d] pl-px pt-[3px]">
        <svg class="h-[36px] w-[36px]" viewBox="0 0 36 36"><path d="M5 5h22v25H5z" fill="#d6a766"/><path d="M11 4h3l1-2h3l1 2h3v3H11z" fill="#fff"/><path d="M12.500 11.500H25l6 6.500v16H12.500z" fill="#dedfe2" stroke="#54566a"/><path d="M25 11.500V18h6z" fill="#fff" stroke="#3f404c"/></svg>
        <span class="h-[17px] overflow-hidden leading-[22px]">Clip...</span>
        <svg class="mt-[28px] h-[10px] w-[10px]"><use href="#bigcaret"/></svg>
      </div>
    </div>
  </section>

  <!-- drawing file tabs -->
  <div class="flex h-[27px] shrink-0 border-b border-[#3c3b42] bg-[#201e23] pl-[17px] pt-[5px]">
    <div class="h-[21px] w-[128px] bg-[#2a2a33] pl-[13px] leading-[22px] text-[#c5c5cb] text-[12.700px] [clip-path:polygon(0_100%,6%_0,95%_0,100%_100%)]">Start</div>
    <div class="-ml-[4px] flex h-[21px] w-[127px] items-center bg-[#3a3b46] pl-[12px] text-[13px] font-bold text-white [clip-path:polygon(0_100%,5%_0,94%_0,100%_100%)]"><span class="w-[69px] translate-y-px">Drawing1*</span>
      <svg class="ml-[21px] h-[12px] w-[12px]" viewBox="0 0 12 12"><path d="m2 1 8 9M10 1 2 10" stroke="#b9bac3" stroke-width="1.600"/></svg>
    </div>
    <div class="ml-[6px] h-[20px] w-[20px] rounded bg-[#2c2c35]"><svg class="ml-[5px] mt-[5px] h-[11px] w-[11px]" viewBox="0 0 10 10"><path d="M5 1v8M1 5h8" stroke="#b4b5bd" stroke-width="1.500"/></svg></div>
  </div>
  <div class="h-[3px] shrink-0 bg-[#1b1a1e] border-b border-[#424248]"></div>

  <!-- model space -->
  <main class="relative h-[470px] shrink-0 border-b border-[#38373b] bg-[#201e21]">
    <div class="flex h-[24px] items-center justify-between pl-[1px] pr-[6px] text-[11.600px] tracking-[-0.1px] text-[#d7d6da]">
      <span>[−][Top][2D Wireframe]</span>
      <span class="flex items-center gap-[6px]">
        <svg class="h-[14px] w-[14px]" viewBox="0 0 14 14"><path d="M2 7.500h10v3H2z" fill="#f3f3f3"/></svg>
        <svg class="h-[14px] w-[14px]" viewBox="0 0 14 14"><path d="M5 4V2.500h6.500V9H10M3 5h6v6H3z" fill="none" stroke="#f3f3f3" stroke-width="1.500"/></svg>
        <svg class="h-[14px] w-[14px]" viewBox="0 0 14 14"><path d="m3 3 8 8.500M11 3 3 11.500" stroke="#f3f3f3" stroke-width="2.200"/></svg>
      </span>
    </div>

    <!-- crosshair, pointer and dynamic input -->
    <svg class="absolute left-[618px] top-[149px] h-[66px] w-[66px]" viewBox="0 0 66 66"><path d="M32.500 0v29M32.500 36v29M0 32.500h29M36 32.500h29" stroke="#a3a2a5"/><path d="M29.500 29.500h6v6h-6z" fill="none" stroke="#c9c9cc"/><path d="M32.500 33v18l4.200-3.500 2.800 6 2.600-1.200-2.700-5.800h5.100z" fill="#f8f8f8" stroke="#333" stroke-width=".6"/></svg>
    <div class="absolute left-[667px] top-[198px] h-[20px] w-[51px] bg-white"></div>

    <!-- navigation bar -->
    <svg class="absolute left-[1248px] top-[23px] h-[233px] w-[30px]" viewBox="0 0 30 234"><path d="M.5.500h29v233H.5z" fill="#545356" stroke="#6a696c"/><g fill="none" stroke="#434245" stroke-width="1.200"><path d="m14.500 15 9.500 4v12l-9.500 5L5 31V19zM5 19l9.500 6 9.500-6M14.500 25v11"/><path d="M14 43h11v11a11 11 0 1 1-11-11z"/><circle cx="14.500" cy="54" r="6"/><path d="M8 103c-2-4-4-6-3-7s4 1 5 3l-1-10c1-1 2-1 3 1l1 6V87c1-1 3-1 3 0l1 9 1-8c1-1 3 0 2 1v8l2-5c2-1 3 0 2 2l-2 10c-2 4-4 5-8 5s-4-2-6-6z"/><path d="M3 116l16 16M17 115 4 130"/><circle cx="19" cy="128" r="5"/><path d="m23 132 3 3M13 153v18c1 3 3 3 4 0v-18c-1-3-3-3-4 0zM7 160h16c3 1 3 5 0 5H8c-3-1-3-4-1-5z"/><path d="M3.500 194.500h6v6h-6zM11.500 194.500h6v6h-6zM19.500 194.500h6v6h-6zM3.500 203.500h16v12h-16z"/></g><path d="M9 206l7 3.500-7 4zM13 73h4l-2 3zM13 143h4l-2 3zM13 181h4l-2 3zM2 114h4v4H2zM16 113h4v4h-4zM2 129h4v4H2z" fill="#3d3c3f"/><circle cx="24.500" cy="6" r="2.500" fill="none" stroke="#454447"/><circle cx="24.500" cy="228" r="2.500" fill="none" stroke="#454447"/></svg>

    <!-- UCS icon -->
    <svg class="absolute left-0 top-[385px] h-[80px] w-[90px]" viewBox="0 0 90 80"><path d="M11.500 21v46M16 70.500h47" stroke="#b0b0b2"/><path d="M7.500 65.500h10v10h-10zM11.500 66v4.500H16M13 7l6 7 6-7M19 14v6M64 57l13 13M77 57 64 70" fill="none" stroke="#bab9bc"/></svg>

    <!-- command line -->
    <div class="absolute left-[580px] top-[424px] h-[16px] w-[438px] rounded-xs bg-[#4a494b] pl-[2px] font-['DejaVu_Sans_Mono',monospace] text-[11.630px] leading-[16px] whitespace-nowrap text-[#dddcde]">Command: Specify opposite corner or [Fence/WPolygon/CPolygon]:</div>
    <div class="absolute left-[257px] top-[444px] flex h-[25px] w-[767px] items-center bg-[#232225]">
      <svg class="h-[20px] w-[10px]" viewBox="0 0 10 20"><path d="M3 1v18M6 1v18" stroke="#b9b9bc" stroke-dasharray="1 1.500" stroke-width="1.300"/></svg>
      <svg class="ml-[1px] h-[14px] w-[14px]" viewBox="0 0 14 14"><path d="m2 2.500 8 8.500M10 2.500 2 11" stroke="#d1d0d3" stroke-width="1.800" transform="translate(1 .5)"/></svg>
      <svg class="ml-[7px] h-[18px] w-[18px]" viewBox="0 0 18 18"><path d="m2 15 8-8" stroke="#c9c8cb" stroke-width="2.600"/><path d="M15 5.500 12.500 6 12 3.500 13.500 2C10 1 8 4 9 6s4 3 6 1z" fill="#c9c8cb" stroke="#c9c8cb"/></svg>
      <div class="ml-[4px] flex h-[25px] w-[713px] items-center rounded-xs bg-[#bfbdc1] pl-[4px] text-[#3e3c40]">
        <svg class="h-[14px] w-[17px]" viewBox="0 0 17 14"><path d="M.7.700h15.500v12.500H.7z" fill="none" stroke="#555457" stroke-width="1.300"/><path d="M1 2h15" stroke="#555457" stroke-width="2"/><path d="m3 5 3 2.200-3 2.200M7 10.500h4" fill="none" stroke="#444" stroke-width="1.200"/></svg>
        <svg class="h-[12px] w-[12px]" viewBox="0 0 12 12"><path d="M1.500 4h8L5.500 8.500z" fill="#4b4a4e"/></svg>
        <span class="ml-[4px] font-['DejaVu_Sans_Mono',monospace] text-[11.600px] italic text-[#5c5a5e]">Type a command</span>
        <svg class="ml-auto mr-[2px] h-[12px] w-[12px]" viewBox="0 0 12 12"><path d="M2.500 7.500h7L6 4z" fill="#3e3d40"/></svg>
      </div>
    </div>
  </main>

  <!-- layout tabs and status bar -->
  <footer class="flex h-[27px] shrink-0 bg-[#201e22] pl-[8px]">
    <div class="h-[18px] w-[68px] bg-[#33343f] pl-[13px] text-[13px] font-bold leading-[23px] text-white [clip-path:polygon(0_0,100%_0,92%_100%,10%_100%)]">Model</div>
    <div class="h-[18px] w-[70px] bg-[#292a33] pl-[10px] text-[12.900px] leading-[23px] text-[#bfbfc5] [clip-path:polygon(2%_0,100%_0,93%_100%,7%_100%)]">Layout1</div>
    <div class="ml-[2px] h-[18px] w-[70px] bg-[#292a33] pl-[9px] text-[12.900px] leading-[23px] text-[#bfbfc5] [clip-path:polygon(2%_0,100%_0,93%_100%,7%_100%)]">Layout2</div>
    <div class="ml-[4px] h-[17px] w-[21px] rounded-b bg-[#292a33]"><svg class="ml-[6px] mt-[5px] h-[10px] w-[10px]" viewBox="0 0 10 10"><path d="M5 1v8M1 5h8" stroke="#b4b5bd" stroke-width="1.500"/></svg></div>

    <div class="ml-[287px] mt-[3px] flex h-[23px] w-[748px] text-[#dddde2]">
      <div class="w-[48px] bg-[#33333b] text-center text-[11.400px] font-semibold leading-[23px]">MODEL</div>
      <div class="ml-[3px] flex w-[64px] items-center bg-[#33333b]">
        <svg class="h-[23px] w-[24px]" viewBox="0 0 24 23"><path d="M4.500 6.500h15M4.500 11.500h15M4.500 16.500h15M7 4v15.500M12 4v15.500M17 4v15.500" stroke="#c9c9cd" stroke-width="1.300"/></svg>
        <svg class="h-[23px] w-[24px]" viewBox="0 0 24 23"><path d="M6 5h2v2H6zM11 5h2v2h-2zM16 5h2v2h-2zM6 10.500h2v2H6zM11 10.500h2v2h-2zM16 10.500h2v2h-2zM6 16h2v2H6zM11 16h2v2h-2zM16 16h2v2h-2z" fill="#dddde1"/></svg>
        <svg class="ml-[2px] h-[11px] w-[11px]"><use href="#bigcaret"/></svg>
      </div>
      <svg class="ml-[3px] h-[23px] w-[23px] bg-[#5f89be]" viewBox="0 0 23 23"><path d="M7.500 5v8M3.500 9h8" stroke="#fff" stroke-width="1.200"/><path d="M10 13.500h10v4H10z" fill="#fff"/><path d="M5.500 17h3" stroke="#fff"/></svg>
      <svg class="ml-px h-[23px] w-[26px] bg-[#33333b]" viewBox="0 0 26 23"><path d="M5.500 4v15H21M5.500 13.500H11V19" fill="none" stroke="#dddde1" stroke-width="1.200"/></svg>
      <div class="ml-px flex w-[40px] items-center bg-[#33333b]">
        <svg class="h-[23px] w-[24px]" viewBox="0 0 24 23"><path d="M12 5.500A6.200 6.200 0 1 0 15 13M8 12h10M8 12l7-7M13 8.500v4" fill="none" stroke="#dddde1" stroke-width="1.200"/></svg>
        <svg class="h-[11px] w-[11px]"><use href="#bigcaret"/></svg>
      </div>
      <div class="ml-px flex w-[38px] items-center bg-[#33333b]">
        <svg class="h-[23px] w-[22px]" viewBox="0 0 22 23"><path d="M3 5l13 13" stroke="#c06b78"/><path d="M9 3.500v16" stroke="#7ea276" stroke-width="1.300"/><circle cx="9" cy="11.500" r="2" fill="#e3e3d6"/></svg>
        <svg class="ml-[1px] h-[11px] w-[11px]"><use href="#bigcaret"/></svg>
      </div>
      <svg class="ml-px h-[23px] w-[23px] bg-[#5f89be]" viewBox="0 0 23 23"><path d="M18 4.500 4 16.500h16" fill="none" stroke="#fff" stroke-width="1.200"/><path d="M10 9.500h2.500V12H10z" fill="#fff"/></svg>
      <svg class="ml-[2px] h-[23px] w-[22px] bg-[#5f89be]" viewBox="0 0 22 23"><path d="M10 5.500h8.500v13.500H5V11" fill="none" stroke="#fff" stroke-width="1.200"/><path d="M3.500 3.500h4v4h-4z" fill="none" stroke="#fff" stroke-width="1.300"/></svg>
      <div class="flex w-[16px] items-center justify-center bg-[#33333b]"><svg class="h-[11px] w-[11px]"><use href="#bigcaret"/></svg></div>
      <svg class="ml-px h-[23px] w-[25px] bg-[#33333b]" viewBox="0 0 25 23"><path d="M4 5h7M4 9h7M4 13h7M4 17h7" stroke="#dddde1" stroke-width="2"/><path d="M12 5h8M12 9h8" stroke="#dddde1"/><path d="M12 13h8M12 17.500h8" stroke="#dddde1" stroke-width="2.500"/></svg>
      <svg class="ml-px h-[23px] w-[26px] bg-[#33333b]" viewBox="0 0 26 23"><path d="M8.500 9.500h11v10h-11z" fill="#7fdb98" stroke="#b3f0c4"/><path d="M7 16V8h11M5.500 3v5M3 5.500h5" fill="none" stroke="#c8d8cf" stroke-width="1.200"/></svg>
      <svg class="ml-[2px] h-[23px] w-[22px] bg-[#5f89be]" viewBox="0 0 22 23"><use href="#person" x="-1" y="1" width="22" height="22"/><circle cx="16.500" cy="6.500" r="2.300" fill="none" stroke="#fff" stroke-width="1.300"/></svg>
      <svg class="ml-[2px] h-[23px] w-[22px] bg-[#5f89be]" viewBox="0 0 22 23"><use href="#person" x="-1" y="1" width="22" height="22"/><path d="m17 3-3 5h2l-1 3 4-5h-2z" fill="#fff"/></svg>
      <div class="ml-px flex w-[58px] items-center bg-[#33333b] text-[11.500px]">
        <svg class="h-[23px] w-[24px]"><use href="#person" y="1" width="23" height="22"/></svg>
        <span class="ml-[4px] w-[16px]">1:1</span>
        <svg class="h-[11px] w-[11px]"><use href="#bigcaret"/></svg>
      </div>
      <div class="ml-[3px] flex w-[40px] items-center bg-[#33333b]">
        <svg class="h-[23px] w-[24px]" viewBox="0 0 24 23"><circle cx="12" cy="11.500" r="4.500" fill="none" stroke="#dddde1" stroke-width="3.500"/><path d="M12 3.500v3M12 16.500v3M4 11.500h3M17 11.500h3M6.300 5.800l2 2M15.700 15.200l2 2M6.300 17.200l2-2M15.700 7.800l2-2" stroke="#dddde1" stroke-width="2.600"/></svg>
        <svg class="ml-[3px] h-[11px] w-[11px]"><use href="#bigcaret"/></svg>
      </div>
      <svg class="ml-px h-[23px] w-[25px] bg-[#33333b]" viewBox="0 0 25 23"><path d="M12 3v17M4 11.500h16" stroke="#dddde1" stroke-width="1.700"/></svg>
      <div class="ml-[3px] flex w-[97px] items-center bg-[#33333b] text-[11.500px]">
        <svg class="h-[23px] w-[24px]" viewBox="0 0 24 23"><path d="M7 4h8v15.500H7z" fill="#d3d3d7"/><path d="M11 6h4M12 9h3M11 12h4M12 15h3M11 18h4" stroke="#33333b" stroke-width="1.200"/></svg>
        <span class="ml-[4px] w-[55px] font-medium">Decimal</span>
        <svg class="h-[11px] w-[11px]"><use href="#bigcaret"/></svg>
      </div>
      <svg class="ml-[3px] h-[23px] w-[25px] bg-[#33333b]" viewBox="0 0 25 23"><path d="M4 4.500h5.500V10H4zM9.500 13.500l3.500 5.500H6.500z" fill="none" stroke="#dddde1" stroke-width="1.200"/><circle cx="16" cy="10.500" r="3" fill="none" stroke="#dddde1" stroke-width="1.200"/></svg>
      <svg class="ml-[2px] h-[23px] w-[31px] bg-[#33333b]" viewBox="0 0 31 23"><path d="M6 4h15v12H6z" fill="#dddde1"/><path d="m7 12 3-5 3 4 3-4 5 4" fill="none" stroke="#33333b"/><path d="m18 9.500 5 10.500H13z" fill="#e9a98a" stroke="#33333b" stroke-width=".7"/></svg>
      <svg class="ml-[2px] h-[23px] w-[24px] bg-[#33333b]" viewBox="0 0 24 23"><path d="M3.500 5.500h15v11h-15z" fill="none" stroke="#c9c9cd" stroke-width="1.200"/><path d="M12 10.500l4-3M16 10V7.500h-3M10 12l-4 2.500M6 12v2.500h3" fill="none" stroke="#dddde1"/></svg>
      <svg class="h-[23px] w-[21px] bg-[#33333b]" viewBox="0 0 21 23"><path d="M3 5.500h16M3 11.500h16M3 17.500h16" stroke="#e3e3e7" stroke-width="2"/></svg>
    </div>
  </footer>

  <!-- taskbar -->
  <div class="flex h-[48px] shrink-0 items-center bg-[linear-gradient(90deg,#0a2560_0%,#0b2a68_14%,#0b3598_25%,#0a2f9c_36%,#0c2a82_50%,#0b247c_66%,#0a2a70_76%,#0a2a68_100%)]">
    <div class="flex h-[41px] w-[115px] shrink-0 items-center self-end bg-white pb-px text-black">
      <svg class="h-[36px] w-[32px] shrink-0" viewBox="0 0 32 36"><path d="M27 3 24 12c-7-3-12 0-12 7s5 9 15 6l-2 8c-4 2-17 2-21-4C0 20 2 8 8 4c5-4 14-3 19-1z" fill="#1e8fc6"/><path d="M2 20 4 29c4 6 17 6 21 4l2-6c-10 5-16 2-20-3z" fill="#54b9df"/><path d="M8 4c5-4 14-3 19-1l-3 9-5-6c-5-1-9 1-12 8z" fill="#2d7da8"/></svg>
      <div class="ml-[7px] flex flex-col leading-[16px] whitespace-nowrap"><span class="font-['Inter'] text-[15.300px] font-light tracking-[-0.350px]">AUTOCAD</span><span class="font-['Inter'] text-[16px] font-extrabold tracking-[0.650px]">CIVIL 3D</span></div>
    </div>
    <svg class="ml-[291px] h-[24px] w-[24px] shrink-0" viewBox="0 0 24 24"><defs><linearGradient id="win" x2="1" y2="1"><stop stop-color="#88dcfa"/><stop offset="1" stop-color="#2bb0ef"/></linearGradient></defs><path d="M0 0h11.300v11.300H0zM12.300 0h11.300v11.300H12.300zM0 12.300h11.300v11.300H0zM12.300 12.300h11.300v11.300H12.300z" fill="url(#win)"/></svg>
    <div class="ml-[13px] flex h-[32px] w-[219px] items-center rounded-full bg-linear-to-r from-[#1e489e] to-[#1e3a80] pl-[10px] text-[15px] text-[#e3e7f3]">
      <svg class="h-[18px] w-[18px]" viewBox="0 0 18 18"><circle cx="10" cy="7.500" r="5" fill="none" stroke="#e9edf6" stroke-width="1.600"/><path d="m6.500 11.500-4 4" stroke="#e9edf6" stroke-width="1.800"/></svg>
      <span class="ml-[8px] translate-y-px">Search</span>
    </div>
    <svg class="ml-[12px] h-[26px] w-[26px]" viewBox="0 0 26 26"><path d="M1 9h18v15H1z" fill="#66676b"/><path d="M7 3h18v16H7z" fill="#f2f3f5"/><path d="M7 9h12v10H7z" fill="#b6b7b9"/></svg>
    <svg class="ml-[18px] h-[26px] w-[26px]" viewBox="0 0 26 26"><defs><linearGradient id="edge" x2="1"><stop stop-color="#32a8e0"/><stop offset="1" stop-color="#6bd16b"/></linearGradient></defs><circle cx="13" cy="13" r="12" fill="#1c72c4"/><path d="M1 12C2 5 7 1 13 1c7 0 12 4 12 10 0 4-3 6-6 6s-4-1-3-3-1-6-5-6c-5 0-9 2-10 6z" fill="url(#edge)"/><path d="M11 9c-3 2-4 11 4 14 3 1 7-1 8-4-4 2-10 0-10-5 0-2 1-3 2-3-1-2-2-3-4-2z" fill="#0f4894"/></svg>
    <svg class="ml-[20px] h-[24px] w-[22px]" viewBox="0 0 24 26"><path d="M2 9l2-4 2 3c2-2 5-2 6-1-1-2 1-5 3-6 0 4 4 4 6 8 3 8-1 15-9 15S0 17 2 9z" fill="#ff7a33"/><path d="M15 1c0 4 4 4 6 8 2 6 1 10-3 13 2-7 0-12-5-15-1-2 0-5 2-6z" fill="#ffd84b"/><path d="M2 11c0 9 6 13 10 13 5 0 8-3 9-7-3 4-8 4-11 2z" fill="#f2385c"/><circle cx="12" cy="13.500" r="4.800" fill="#7a3fd0"/><path d="M6 11c3-1 4-1 6 0 0 2-3 2-4 3z" fill="#ff9a40"/></svg>
    <div class="ml-[14px] flex h-[42px] w-[40px] flex-col items-center rounded bg-white/6 pt-[8px]">
      <svg class="h-[24px] w-[24px] bg-[#f4e5e7]" viewBox="0 0 24 24"><path d="m4 21 6-18h4.500L20 21h-4.500l-1.200-4H9l-1.500 4zM10 13.500h3.500L12 8z" fill="#b51520"/><path d="m4 21 6-18 1.500 4L7.500 21z" fill="#8c0d17"/></svg>
      <div class="mt-[4px] h-[3px] w-[16px] rounded-full bg-[#62b9ee]"></div>
    </div>
    <div class="ml-[9px] flex h-[42px] w-[28px] flex-col items-center pt-[7px]">
      <svg class="h-[26px] w-[28px]" viewBox="0 0 28 26"><path d="M4 1h14q2 0 2 2v15H2V3q0-2 2-2z" fill="#f1f1f3"/><path d="M5.500 4.500h9v9h-9z" fill="none" stroke="#d23a3f" stroke-width="2.200" stroke-dasharray="2.200 1.200"/><path d="M16 6v13M9 15.500h13" stroke="#85898e" stroke-width="2.600"/><circle cx="23.500" cy="14.500" r="2.300" fill="none" stroke="#3a9be8" stroke-width="1.600"/><circle cx="15" cy="22.500" r="2.300" fill="none" stroke="#3a9be8" stroke-width="1.600"/></svg>
      <div class="mt-[4px] h-[2px] w-[6px] rounded-full bg-[#a4aac0]"></div>
    </div>
    <svg class="ml-[188px] h-[14px] w-[16px]" viewBox="0 0 16 14"><path d="m2 10 6-6 6 6" fill="none" stroke="#e3e7f3" stroke-width="1.400"/></svg>
    <svg class="ml-[15px] h-[18px] w-[20px]" viewBox="0 0 20 18"><path d="M4 13c-5-1-4-7 0-7 1-5 9-5 10-1 5 0 5 7 2 8z" fill="#b5bfd1"/><circle cx="13" cy="12" r="4.500" fill="#e9edf6"/><path d="M10.500 11.500c1-2.500 4-2.500 5 0M15.500 13c-1 2-4 2-5 0M13.500 11H16V9M12.500 13.500H10v2" fill="none" stroke="#2a4579"/></svg>
    <div class="relative ml-auto h-[48px] w-[161px] shrink-0 overflow-hidden">
      <span class="absolute left-[99px] top-[9px] text-[11.500px] leading-[14px] text-[#dfe4f2]">9:40 PM</span>
      <div class="absolute bottom-0 right-0 flex h-[35px] w-[159px] items-center bg-linear-to-b from-[#e8180d] to-[#c4150e] pl-[3px]">
        <svg class="h-[25px] w-[28px]" viewBox="0 0 28 25"><path d="M4 0h20q4 0 4 4v17q0 4-4 4H4q-4 0-4-4V4q0-4 4-4z" fill="#fff"/><path d="m8.500 6 11 6.500-11 6.500z" fill="#c5150f"/></svg>
        <span class="ml-[11px] font-['Liberation_Sans'] text-[20.800px] font-bold tracking-[0.200px] text-white">Subscribe</span>
      </div>
    </div>
  </div>

  <!-- dotted frame -->
  <div class="absolute left-0 top-0 h-[2px] w-full bg-[repeating-linear-gradient(90deg,#9a4f68_0_2px,#2b1822_2px_4px)]"></div>
  <div class="absolute left-0 top-0 h-[679px] w-[2px] bg-[repeating-linear-gradient(180deg,#9a4f68_0_2px,#2b1822_2px_4px)]"></div>
  <div class="absolute right-0 top-0 h-[684px] w-[2px] bg-[repeating-linear-gradient(180deg,#9a4f68_0_2px,#2b1822_2px_4px)]"></div>
  <div class="absolute bottom-0 left-[115px] h-[2px] w-[1006px] bg-[repeating-linear-gradient(90deg,#8a5a9c_0_2px,#1a2468_2px_4px)]"></div>
</div>
</body>
</html>
